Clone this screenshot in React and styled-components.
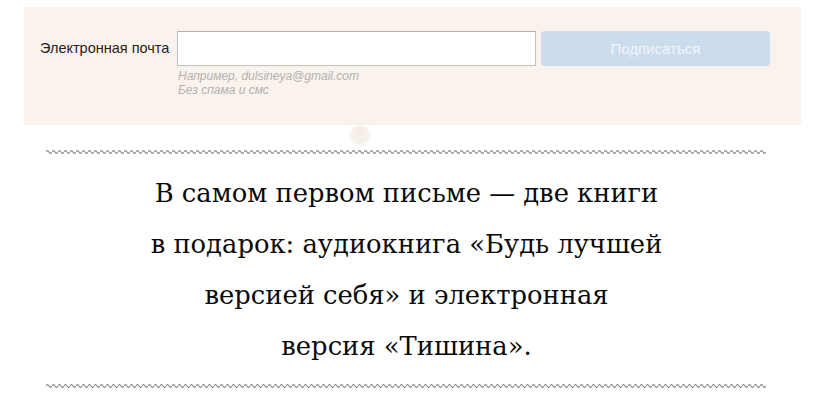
import React from 'react';
import styled, { createGlobalStyle } from 'styled-components';

const GlobalStyle = createGlobalStyle`
  body {
    margin: 0;
    background: #fff;
    font-family: 'Liberation Sans', Arial, sans-serif;
  }
`;

const Page = styled.div`
  width: 827px;
  height: 399px;
  overflow: hidden;
  position: relative;
`;

const Panel = styled.section`
  margin: 7px 26px 0 24px;
  height: 118px;
  background: #faf3ed;
  box-sizing: border-box;
  padding: 24px 0 0 16px;
`;

const Row = styled.div`
  display: flex;
  align-items: flex-start;
`;

const Label = styled.label`
  width: 137px;
  font-size: 14.5px;
  color: #222;
  line-height: 35px;
  white-space: nowrap;
`;

const Field = styled.div`
  display: flex;
  flex-direction: column;
`;

const Input = styled.input`
  width: 359px;
  height: 35px;
  box-sizing: border-box;
  border: 1px solid #c4c1bd;
  border-top-color: #b5b2ae;
  background: #fff;
  outline: none;
  margin: 0;
`;

const Hint = styled.div`
  font-size: 12px;
  font-style: italic;
  color: #b3b1ae;
  line-height: 14px;
  padding-left: 1px;
  &:first-of-type {
    margin-top: 3px;
  }
`;

const Button = styled.button`
  margin-left: 5px;
  width: 229px;
  height: 35px;
  border: none;
  border-radius: 4px;
  background: #cddcec;
  color: #f1f5fa;
  font-family: 'Liberation Sans', Arial, sans-serif;
  font-size: 15px;
`;

const Dot = styled.div`
  position: absolute;
  left: 350px;
  top: 125px;
  width: 20px;
  height: 20px;
  border-radius: 50%;
  background: #f6f0e9;
  filter: blur(1.5px);
`;

const Spacer = styled.div`
  height: 24px;
`;

const Wave = styled.svg`
  display: block;
  margin-left: 46px;
`;

const Quote = styled.p`
  margin: 13px 0 11px;
  width: 813px;
  text-align: center;
  font-family: 'DejaVu Serif', 'Liberation Serif', serif;
  font-size: 25.8px;
  line-height: 51px;
  color: #0a0a0a;
`;

const WavyLine = ({ id }) => (
  <Wave width="720" height="6" viewBox="0 0 720 6">
    <defs>
      <pattern id={id} width="6" height="6" patternUnits="userSpaceOnUse">
        <path d="M0 3 Q1.5 0.3 3 3 T6 3" fill="none" stroke="#888" strokeWidth="1.1" />
      </pattern>
    </defs>
    <rect width="720" height="6" fill={`url(#${id})`} />
  </Wave>
);

export default function App() {
  return (
    <Page>
      <GlobalStyle />
      <Panel>
        <Row>
          <Label htmlFor="email">Электронная почта</Label>
          <Field>
            <Input id="email" type="email" />
            <Hint>Например, dulsineya@gmail.com</Hint>
            <Hint>Без спама и смс</Hint>
          </Field>
          <Button type="button">Подписаться</Button>
        </Row>
      </Panel>
      <Dot />
      <Spacer />
      <WavyLine id="wave-top" />
      <Quote>
        В самом первом письме — две книги
        <br />
        в подарок: аудиокнига «Будь лучшей
        <br />
        версией себя» и электронная
        <br />
        версия «Тишина».
      </Quote>
      <WavyLine id="wave-bottom" />
    </Page>
  );
}
